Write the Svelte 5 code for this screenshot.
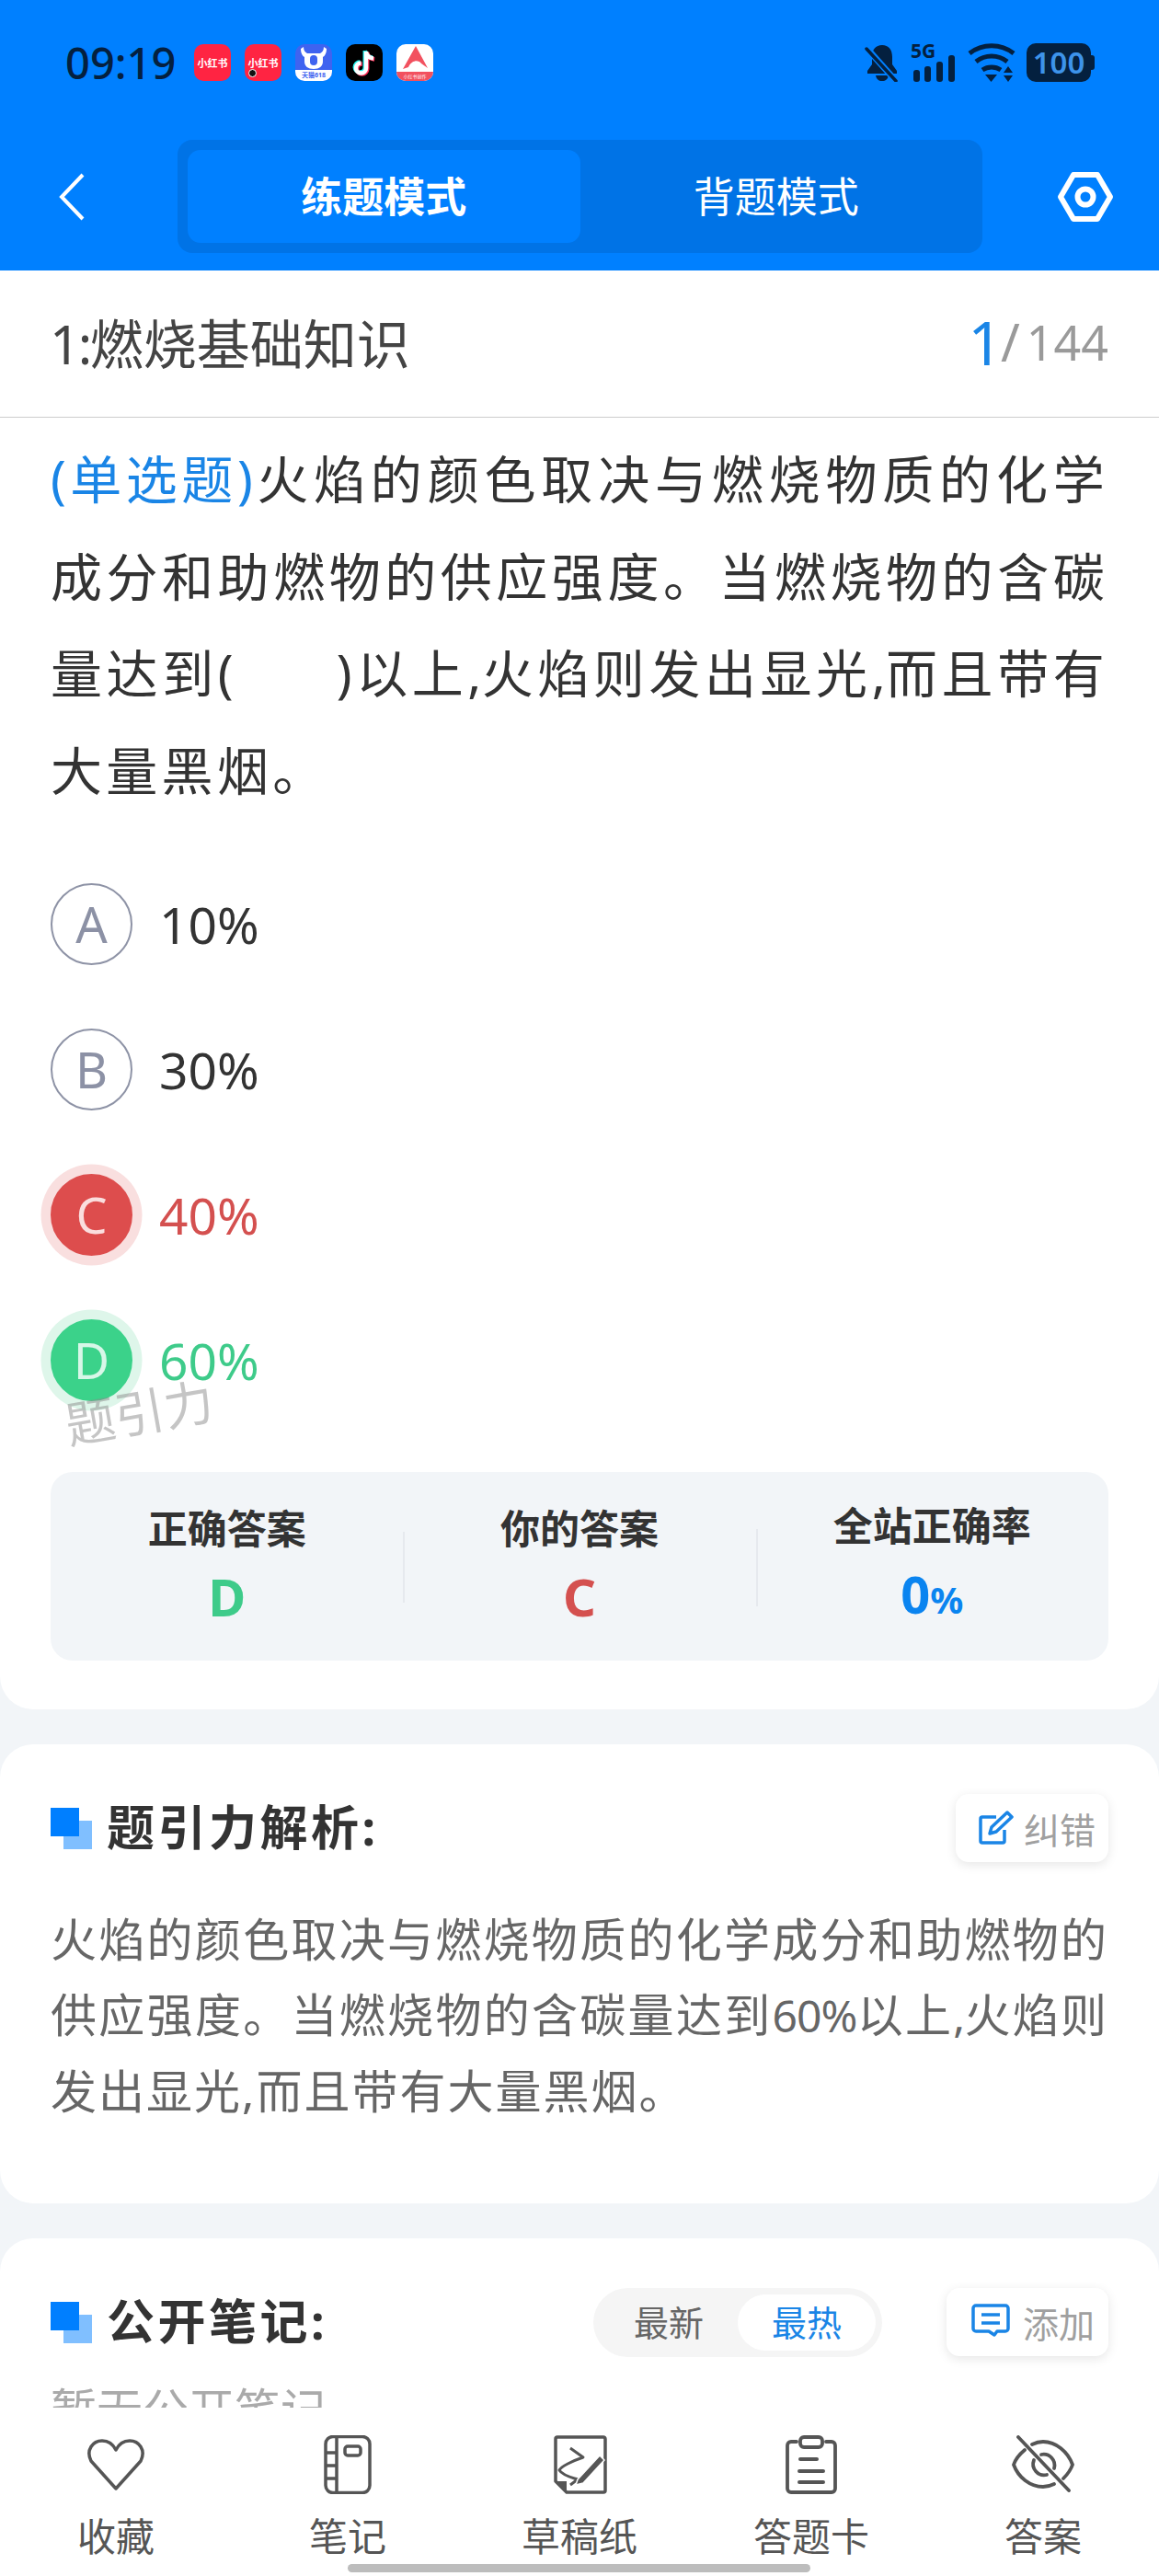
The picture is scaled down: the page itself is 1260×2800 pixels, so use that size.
<script>
	const options = [
		{ key: 'A', text: '10%', state: '' },
		{ key: 'B', text: '30%', state: '' },
		{ key: 'C', text: '40%', state: 'wrong' },
		{ key: 'D', text: '60%', state: 'right' }
	];
</script>

<div class="page">
	<header class="header">
		<div class="status">
			<span class="time">09:19</span>
			<div class="apps">
				<div class="app red"><span>小红书</span></div>
				<div class="app red"><span>小红书</span><i class="dot"></i></div>
				<div class="app uc">
					<svg viewBox="0 0 40 28" width="40" height="28" class="cow">
						<path d="M9 3c0 4 2 6 4 7h14c2-1 4-3 4-7l3 2c0 5-2 8-4 9v5c0 5-4 8-10 8s-10-3-10-8v-5c-2-1-4-4-4-9z" fill="#fff" />
						<rect x="16" y="12" width="8" height="11" rx="4" fill="#3f63f0" />
					</svg>
					<span>天猫618</span>
				</div>
				<div class="app tiktok">
					<svg viewBox="0 0 40 40" width="40" height="40">
						<path d="M22 8v18a5.500 5.500 0 1 1-5.500-5.500M22 8c.5 4 3.500 7 8 7.500" fill="none" stroke="#25f4ee" stroke-width="4.500" transform="translate(-1.200 -1)" />
						<path d="M22 8v18a5.500 5.500 0 1 1-5.500-5.500M22 8c.5 4 3.500 7 8 7.500" fill="none" stroke="#fe2c55" stroke-width="4.500" transform="translate(1.200 1)" />
						<path d="M22 8v18a5.500 5.500 0 1 1-5.500-5.500M22 8c.5 4 3.500 7 8 7.500" fill="none" stroke="#fff" stroke-width="4.500" />
					</svg>
				</div>
				<div class="app studio">
					<svg viewBox="0 0 40 30" width="40" height="30">
						<path d="M21 2 L7 27 L13 25 C17 17 24 17 27 21 L34 26z" fill="#f2515f" />
					</svg>
					<span>小红书创作</span>
				</div>
			</div>
			<div class="sys">
				<svg viewBox="0 0 38 42" width="38" height="42">
					<path d="M19 2c-7 0-11 5-11 13v8l-5 7v3h32v-3l-5-7v-8c0-8-4-13-11-13zM12 35c1 4 3 6 7 6s6-2 7-6z" fill="#04203f" />
					<path d="M2 5l32 36" stroke="#0080ff" stroke-width="7" />
					<path d="M2 6l32 35" stroke="#04203f" stroke-width="3.500" stroke-linecap="round" />
				</svg>
				<svg viewBox="0 0 50 42" width="50" height="42">
					<text x="0" y="16" class="fiveg">5G</text>
					<rect x="3" y="29" width="7" height="13" rx="3" fill="#04203f" />
					<rect x="15" y="25" width="7" height="17" rx="3" fill="#04203f" />
					<rect x="28" y="20" width="7" height="22" rx="3" fill="#04203f" />
					<rect x="41" y="13" width="7" height="29" rx="3" fill="#04203f" />
				</svg>
				<svg viewBox="0 0 52 42" width="52" height="42">
					<g fill="none" stroke="#04203f" stroke-width="5">
						<path d="M2 11c14-11 34-11 48 0" />
						<path d="M9 20c10-8 24-8 34 0" />
						<path d="M16 29c6-4 14-4 20 0" />
					</g>
					<path d="M19 34h13l-6.500 8z" fill="#04203f" />
					<path d="M44 25l5 7h-10zM44 42l5-7h-10z" fill="#04203f" />
				</svg>
				<div class="battery"><span>100</span></div>
			</div>
		</div>
		<nav class="nav">
			<svg class="back" viewBox="0 0 30 52" width="30" height="52">
				<path d="M27 2 L4 26 L27 50" fill="none" stroke="#fff" stroke-width="4" />
			</svg>
			<div class="mode">
				<div class="tab active">练题模式</div>
				<div class="tab">背题模式</div>
			</div>
			<svg class="gear" viewBox="0 0 62 56" width="62" height="56">
				<path d="M18 4 H44 L58 28 L44 52 H18 L4 28z" fill="none" stroke="#fff" stroke-width="6" stroke-linejoin="round" />
				<circle cx="31" cy="28" r="8.500" fill="none" stroke="#fff" stroke-width="6" />
			</svg>
		</nav>
	</header>

	<main class="scroll">
		<section class="card question">
			<div class="title-row">
				<span class="chapter"><span class="index">1:</span>燃烧基础知识</span>
				<span class="count"><b>1</b><em>/</em>144</span>
			</div>
			<p class="stem">
				<span class="tag">(单选题)</span>火焰的颜色取决与燃烧物质的化学成分和助燃物的供应强度。当燃烧物的含碳量达到(<span class="blank"></span>)以上<span class="comma">,</span>火焰则发出显光<span class="comma">,</span>而且带有大量黑烟。
			</p>
			<div class="options">
				{#each options as opt}
					<div class="option {opt.state}">
						<span class="circle">{opt.key}</span>
						<span class="opt-text">{opt.text}</span>
					</div>
				{/each}
				<span class="watermark">题引力</span>
			</div>
			<div class="stats">
				<div class="stat">
					<span class="label">正确答案</span>
					<span class="value green">D</span>
				</div>
				<div class="stat">
					<span class="label">你的答案</span>
					<span class="value red-text">C</span>
				</div>
				<div class="stat">
					<span class="label">全站正确率</span>
					<span class="value blue">0<small>%</small></span>
				</div>
			</div>
		</section>

		<section class="card analysis">
			<div class="card-head">
				<span class="mark"></span>
				<h2>题引力解析:</h2>
				<button class="chip fix">
					<svg viewBox="0 0 40 40" width="40" height="40">
						<path d="M30 22v12a2 2 0 0 1-2 2H6a2 2 0 0 1-2-2V10a2 2 0 0 1 2-2h15" fill="none" stroke="#1a85e6" stroke-width="3.500" />
						<path d="M14 26l2-7L33 3l5 5-17 16z" fill="none" stroke="#1a85e6" stroke-width="3.500" stroke-linejoin="round" />
					</svg>
					纠错
				</button>
			</div>
			<p class="explain">火焰的颜色取决与燃烧物质的化学成分和助燃物的供应强度。当燃烧物的含碳量达到<span class="num">60%</span>以上<span class="num">,</span>火焰则发出显光,而且带有大量黑烟。</p>
		</section>

		<section class="card notes">
			<div class="card-head">
				<span class="mark"></span>
				<h2>公开笔记:</h2>
				<div class="sort">
					<span>最新</span>
					<span class="on">最热</span>
				</div>
				<button class="chip add">
					<svg viewBox="0 0 42 40" width="42" height="40">
						<path d="M5 2h32a3 3 0 0 1 3 3v22a3 3 0 0 1-3 3h-9l-3 4-6-4H5a3 3 0 0 1-3-3V5a3 3 0 0 1 3-3z" fill="none" stroke="#1a85e6" stroke-width="3.500" stroke-linejoin="round" />
						<path d="M11 12h20M11 21h20" stroke="#1a85e6" stroke-width="3.500" />
					</svg>
					添加
				</button>
			</div>
			<p class="empty">暂无公开笔记</p>
		</section>
	</main>

	<footer class="toolbar">
		<div class="tool">
			<svg viewBox="0 0 64 64" width="64" height="64">
				<path d="M32 58 L5 28 C-1 16 7 6 17 6 C24 6 29 10 32 16 C35 10 40 6 47 6 C57 6 65 16 59 28z" fill="none" stroke="#555" stroke-width="3.500" stroke-linejoin="round" />
			</svg>
			<span>收藏</span>
		</div>
		<div class="tool">
			<svg viewBox="0 0 64 64" width="64" height="64">
				<rect x="8" y="1.500" width="48" height="61" rx="8" fill="none" stroke="#555" stroke-width="3.500" />
				<path d="M20 2v60M8 19h12M8 33h12M8 47h12" fill="none" stroke="#555" stroke-width="3.500" />
				<rect x="29" y="12" width="17" height="10" rx="3" fill="none" stroke="#555" stroke-width="3.500" />
			</svg>
			<span>笔记</span>
		</div>
		<div class="tool">
			<svg viewBox="0 0 64 64" width="64" height="64">
				<path d="M18 62 H58 a2 2 0 0 0 2-2 V4 a2 2 0 0 0-2-2 H8 a2 2 0 0 0-2 2 V50z" fill="none" stroke="#555" stroke-width="3.500" stroke-linejoin="round" />
				<path d="M6 50 H18 V62z" fill="#555" />
				<path d="M22 14 L36 24 C24 28 12 34 10 38 C14 44 24 46 30 48 L22 54" fill="none" stroke="#555" stroke-width="3" stroke-linejoin="round" />
				<path d="M30 48 L54 22 L59 27 L36 52 L28 54z" fill="#555" stroke="#fff" stroke-width="1.500" />
			</svg>
			<span>草稿纸</span>
		</div>
		<div class="tool">
			<svg viewBox="0 0 64 64" width="64" height="64">
				<path d="M16 7h-6a4 4 0 0 0-4 4v47a4 4 0 0 0 4 4h44a4 4 0 0 0 4-4V11a4 4 0 0 0-4-4h-6" fill="none" stroke="#555" stroke-width="3.800" stroke-linecap="round" />
				<rect x="20" y="2" width="24" height="11" rx="4" fill="none" stroke="#555" stroke-width="3.800" />
				<path d="M20 26h18M19 39h26M19 51h26" stroke="#555" stroke-width="4" stroke-linecap="round" />
			</svg>
			<span>答题卡</span>
		</div>
		<div class="tool">
			<svg viewBox="0 0 68 64" width="68" height="64">
				<path d="M14 16 C8 21 4 26 2 32 C7 46 20 56 34 56 C38 56 42 55 46 53 M22 10 C26 8 30 7 34 7 C48 7 61 18 66 32 C64 38 60 43 56 47" fill="none" stroke="#555" stroke-width="3.800" stroke-linecap="round" />
				<path d="M24 27 A12 12 0 0 0 38 43 M32 21 A12 12 0 0 1 46 36" fill="none" stroke="#555" stroke-width="3.800" stroke-linecap="round" />
				<path d="M7 2 L62 60" stroke="#555" stroke-width="3.800" stroke-linecap="round" />
			</svg>
			<span>答案</span>
		</div>
		<div class="home-bar"></div>
	</footer>
</div>

<style>
	:global(body) {
		margin: 0;
		background: #f2f5f8;
	}

	.page {
		position: relative;
		width: 1260px;
		height: 2800px;
		display: flex;
		flex-direction: column;
		overflow: hidden;
		background: #f2f5f8;
		color: #333;
		font-family: 'Noto Sans', 'Noto Sans CJK SC', sans-serif;
	}

	p,
	h2 {
		margin: 0;
	}

	/* header */
	.header {
		flex: none;
		height: 294px;
		background: #0080ff;
		box-sizing: border-box;
	}

	.status {
		height: 136px;
		box-sizing: border-box;
		padding: 47px 70px 0 71px;
		display: flex;
		align-items: flex-start;
	}

	.time {
		font-size: 47px;
		line-height: 42px;
		font-weight: 500;
		color: #04203f;
		width: 140px;
	}

	.apps {
		display: flex;
		gap: 15px;
		margin-top: 1px;
	}

	.app {
		position: relative;
		width: 40px;
		height: 40px;
		border-radius: 10px;
		overflow: hidden;
		display: flex;
		flex-direction: column;
		align-items: center;
		justify-content: center;
	}

	.app.red {
		background: #ff2442;
		color: #fff;
		font-size: 11px;
		font-weight: 700;
		white-space: nowrap;
	}

	.dot {
		position: absolute;
		left: 4px;
		bottom: 4px;
		width: 9px;
		height: 9px;
		border-radius: 50%;
		background: #111;
		border: 1.500px solid #fff;
		box-sizing: border-box;
	}

	.app.uc {
		background: #3f63f0;
		justify-content: flex-start;
	}

	.cow {
		flex: none;
	}

	.app.uc span {
		flex: 1;
		width: 100%;
		background: #fff;
		color: #3f63f0;
		font-size: 7px;
		line-height: 12px;
		text-align: center;
		white-space: nowrap;
		font-weight: 700;
	}

	.app.tiktok {
		background: #000;
	}

	.app.studio {
		background: #fff;
		justify-content: flex-start;
	}

	.app.studio span {
		flex: 1;
		width: 100%;
		background: #f2515f;
		color: #fff;
		font-size: 5px;
		line-height: 10px;
		text-align: center;
		white-space: nowrap;
	}

	.sys {
		margin-left: auto;
		display: flex;
		align-items: center;
		gap: 12px;
	}

	.fiveg {
		font-size: 21px;
		font-weight: 700;
		fill: #04203f;
	}

	.battery {
		position: relative;
		width: 70px;
		height: 42px;
		margin-right: 4px;
		border-radius: 10px;
		background: #04203f;
		color: #3d93ea;
		font-size: 33px;
		line-height: 42px;
		font-weight: 600;
		text-align: center;
	}

	.battery::after {
		content: '';
		position: absolute;
		right: -4px;
		top: 13px;
		width: 4px;
		height: 16px;
		border-radius: 0 3px 3px 0;
		background: #04203f;
	}

	.nav {
		display: flex;
		align-items: center;
		height: 123px;
		margin-top: 16px;
		padding-left: 63px;
	}

	.back {
		flex: none;
	}

	.mode {
		width: 875px;
		height: 123px;
		box-sizing: border-box;
		margin-left: 100px;
		padding: 11px;
		display: flex;
		background: #0073e6;
		border-radius: 16px;
	}

	.tab {
		flex: 1;
		display: flex;
		align-items: center;
		justify-content: center;
		padding-bottom: 5px;
		color: #fff;
		font-size: 45px;
		border-radius: 14px;
	}

	.tab.active {
		background: #0080ff;
		font-weight: 700;
	}

	.gear {
		flex: none;
		margin-left: 81px;
	}

	/* scroll area */
	.scroll {
		flex: 1;
		min-height: 0;
		overflow: hidden;
		display: flex;
		flex-direction: column;
		gap: 38px;
	}

	.card {
		flex: none;
		background: #fff;
		border-radius: 36px;
	}

	.question {
		height: 1564px;
		border-radius: 0 0 36px 36px;
		padding: 0 55px;
		box-sizing: border-box;
	}

	.title-row {
		margin: 0 -55px;
		height: 160px;
		padding: 0 55px 5px;
		box-sizing: border-box;
		display: flex;
		align-items: center;
		justify-content: space-between;
		border-bottom: 1.500px solid #ccc;
	}

	.chapter {
		font-size: 58px;
		color: #444;
		margin-left: -1px;
	}

	.index {
		letter-spacing: -2.500px;
	}

	.count {
		font-size: 52px;
		color: #9a9a9a;
		display: flex;
		align-items: center;
	}

	.count b {
		font-size: 66px;
		font-weight: 400;
		color: #1a85e6;
	}

	.count em {
		font-style: normal;
		margin: 0 7px 0 -2px;
		font-size: 56px;
	}

	.stem {
		margin-top: 14px;
		font-size: 56px;
		line-height: 105.700px;
		letter-spacing: 4.300px;
		text-align: justify;
		color: #333;
	}

	.tag {
		color: #1a85e6;
		letter-spacing: 3px;
	}

	.blank {
		display: inline-block;
		width: 108px;
	}

	.comma {
		letter-spacing: 0;
	}

	.options {
		position: relative;
		margin-top: 69px;
		display: flex;
		flex-direction: column;
		gap: 69px;
	}

	.option {
		display: flex;
		align-items: center;
		height: 89px;
		font-size: 55px;
		color: #333;
	}

	.circle {
		flex: none;
		width: 89px;
		height: 89px;
		box-sizing: border-box;
		display: flex;
		align-items: center;
		justify-content: center;
		border: 2.500px solid #8e93a6;
		border-radius: 50%;
		color: #8c91a5;
		font-size: 54px;
		font-weight: 400;
	}

	.opt-text {
		margin-left: 29px;
	}

	.wrong .circle {
		background: #dd4d4d;
		border-color: #dd4d4d;
		color: #fadede;
		box-shadow: 0 0 0 10.500px #f9dfdf;
	}

	.wrong .opt-text {
		color: #d4504f;
	}

	.right .circle {
		background: #3bd28a;
		border-color: #3bd28a;
		color: #d8f7e8;
		box-shadow: 0 0 0 10.500px #def6ea;
	}

	.right .opt-text {
		color: #3ecb8a;
	}

	.watermark {
		position: absolute;
		left: 15px;
		bottom: -49px;
		font-size: 54px;
		color: rgba(140, 140, 140, 0.5);
		transform: rotate(-10deg);
	}

	.stats {
		margin-top: 77px;
		height: 205px;
		display: grid;
		grid-template-columns: repeat(3, 1fr);
		background: #f2f5f8;
		border-radius: 24px;
		align-items: center;
	}

	.stat {
		position: relative;
		display: flex;
		flex-direction: column;
		align-items: center;
		gap: 4px;
	}

	.stat + .stat::before {
		content: '';
		position: absolute;
		left: 0;
		top: 34px;
		bottom: 31px;
		width: 2px;
		background: #e6e9ee;
	}

	.label {
		font-size: 43px;
		line-height: 62px;
		font-weight: 700;
		color: #333;
	}

	.value {
		font-size: 56px;
		line-height: 76px;
		font-weight: 700;
	}

	.value small {
		font-size: 40px;
	}

	.green {
		color: #3ecb8a;
	}

	.red-text {
		color: #d4504f;
	}

	.blue {
		color: #0a84f0;
	}

	.analysis {
		height: 499px;
		padding: 0 55px;
		box-sizing: border-box;
	}

	.card-head {
		display: flex;
		align-items: center;
		height: 74px;
		padding-top: 54px;
	}

	.mark {
		flex: none;
		position: relative;
		width: 45px;
		height: 45px;
		margin-right: 17px;
	}

	.mark::before,
	.mark::after {
		content: '';
		position: absolute;
		width: 31px;
		height: 31px;
	}

	.mark::before {
		right: 0;
		bottom: 0;
		background: #80bfff;
	}

	.mark::after {
		left: 0;
		top: 0;
		background: #007fff;
	}

	h2 {
		font-size: 52px;
		font-weight: 700;
		letter-spacing: 3.500px;
		padding-bottom: 8px;
		color: #333;
		flex: 1;
		margin-left: -1px;
	}

	.chip {
		flex: none;
		height: 74px;
		display: flex;
		align-items: center;
		border: 0;
		background: #fff;
		border-radius: 14px;
		box-shadow: 0 3px 12px rgba(0, 0, 0, 0.1);
		font: inherit;
		font-size: 39px;
		color: #a0a0a0;
	}

	.fix {
		width: 166px;
		padding: 0 0 0 23px;
		gap: 11px;
	}

	.add {
		width: 176px;
		padding: 0 0 0 27px;
		gap: 14px;
	}

	.explain {
		margin-top: 43px;
		font-size: 50px;
		line-height: 82px;
		letter-spacing: 2px;
		text-align: justify;
		color: #666;
	}

	.num {
		font-size: 48px;
		letter-spacing: -1px;
	}

	.notes {
		height: 400px;
		padding: 0 55px;
		box-sizing: border-box;
	}

	.sort {
		flex: none;
		width: 314px;
		height: 75px;
		margin-right: 70px;
		box-sizing: border-box;
		padding: 7px;
		display: flex;
		align-items: center;
		background: #f5f5f5;
		border-radius: 38px;
		font-size: 38px;
		color: #666;
	}

	.sort span {
		flex: 1;
		text-align: center;
		line-height: 61px;
		border-radius: 31px;
	}

	.sort .on {
		flex: none;
		width: 150px;
		background: #fff;
		color: #1a85e6;
	}

	.empty {
		margin-top: 19px;
		font-size: 50px;
		color: #aaa;
	}

	/* bottom bar */
	.toolbar {
		position: relative;
		flex: none;
		height: 183px;
		box-sizing: border-box;
		padding-top: 30px;
		display: grid;
		grid-template-columns: repeat(5, 1fr);
		align-items: start;
		background: #fff;
	}

	.tool {
		display: flex;
		flex-direction: column;
		align-items: center;
		color: #555;
		font-size: 42px;
		line-height: 60px;
		gap: 16px;
	}

	.home-bar {
		position: absolute;
		left: 378px;
		bottom: 4px;
		width: 503px;
		height: 9px;
		border-radius: 5px;
		background: #bdbdbd;
	}
</style>
